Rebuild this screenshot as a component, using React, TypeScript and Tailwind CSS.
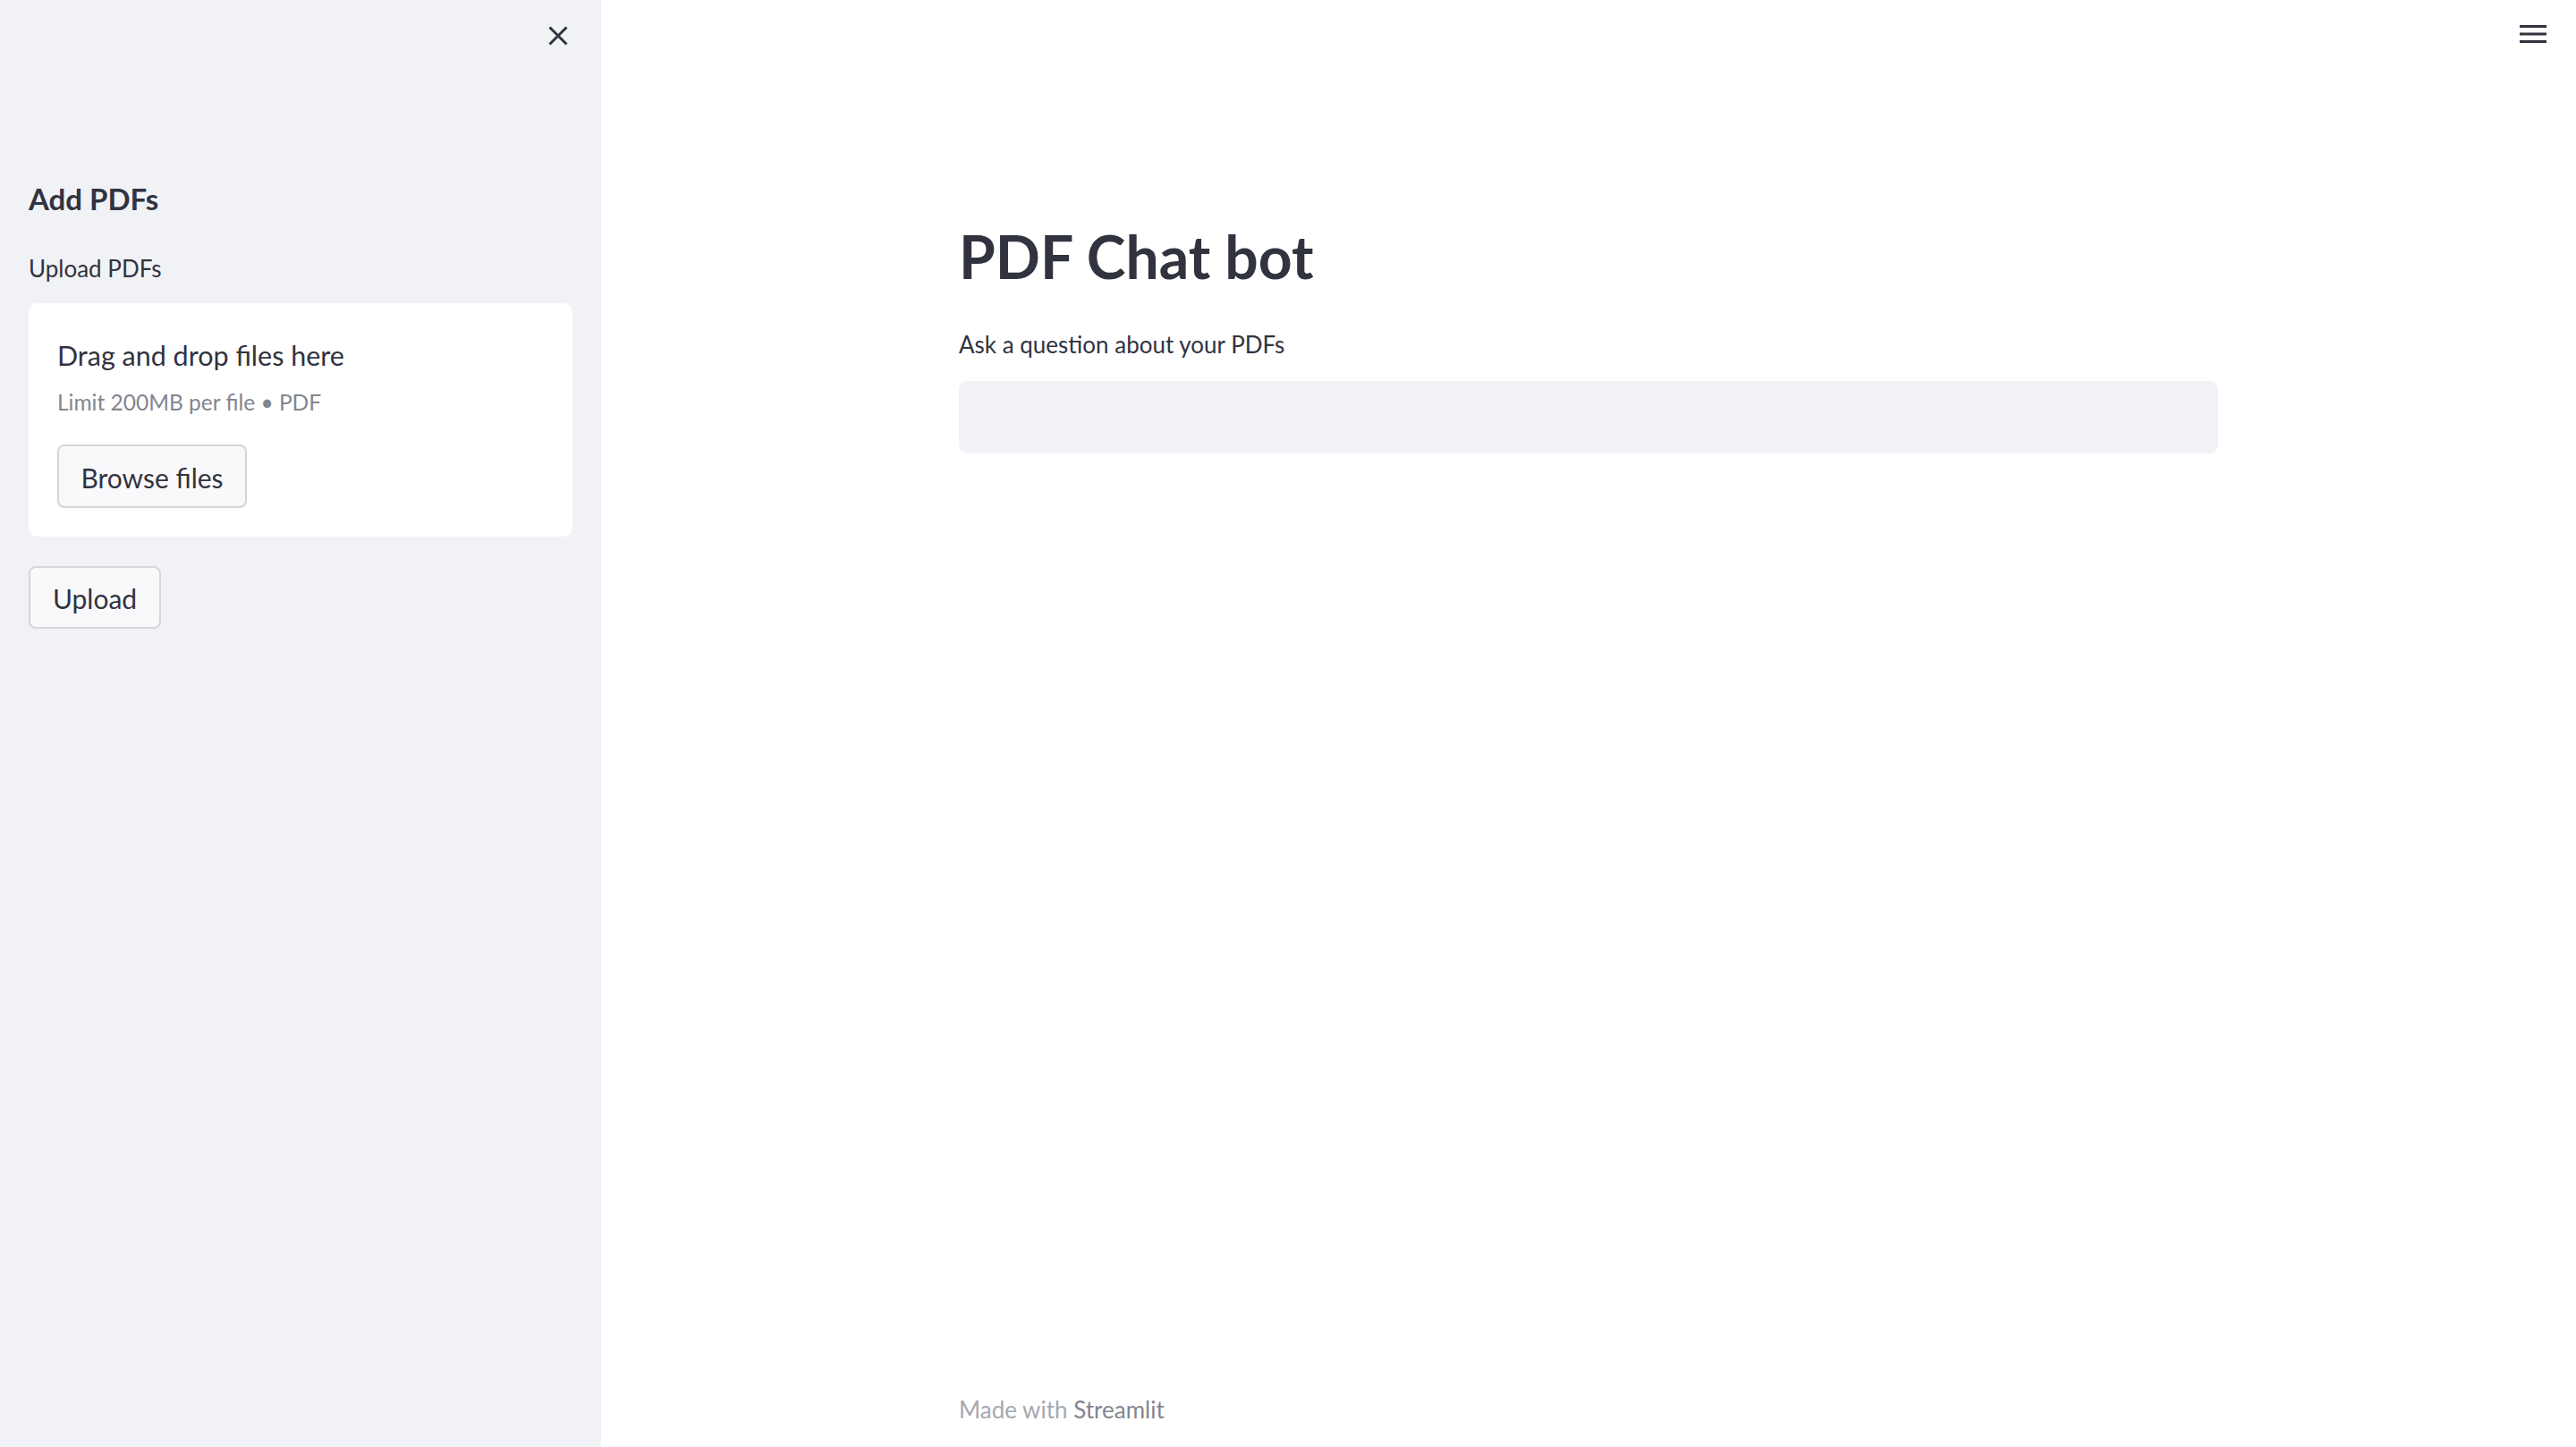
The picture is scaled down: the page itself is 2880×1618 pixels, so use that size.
import React from "react";

const font = { fontFamily: "Lato, 'Noto Sans', sans-serif" };

export default function App() {
  return (
    <div className="flex h-[1618px] w-full overflow-hidden bg-white text-[#31333f]" style={font}>
      {/* Sidebar */}
      <aside className="flex w-[672px] shrink-0 flex-col bg-[#f0f2f6] px-[32px]">
        <div className="flex justify-end pr-[5px] pt-[29px]">
          <svg width="22" height="22" viewBox="0 0 22 22" fill="none">
            <path d="M1.5 1.5L20.5 20.5M20.5 1.5L1.5 20.5" stroke="#31333f" strokeWidth="3" />
          </svg>
        </div>
        <h3 className="mt-[155px] text-[33px] font-bold leading-none">Add PDFs</h3>
        <div className="mt-[48px] text-[26px] leading-none">Upload PDFs</div>
        <section className="mt-[26px] flex h-[261px] flex-col items-start rounded-[10px] bg-white px-[32px] pt-[43px]">
          <div className="text-[30.5px] leading-none">Drag and drop files here</div>
          <div className="mt-[25px] text-[24.5px] leading-none text-[#838590]">Limit 200MB per file • PDF</div>
          <button className="mt-[35px] flex h-[71px] w-[212px] items-center justify-center rounded-[8px] border-2 border-[#d6d6d9] bg-[#f9f9fb] pt-[2px] text-[30px] leading-none text-[#31333f]">
            Browse files
          </button>
        </section>
        <button className="mt-[33px] flex h-[70px] w-[148px] items-center justify-center rounded-[8px] border-2 border-[#d6d6d9] bg-[#f9f9fb] pt-[2px] text-[30px] leading-none text-[#31333f]">
          Upload
        </button>
      </aside>

      {/* Main */}
      <main className="relative flex flex-1 flex-col">
        <div className="absolute right-[33px] top-[27px]">
          <svg width="30" height="22" viewBox="0 0 30 22" fill="none">
            <rect x="0" y="1" width="30" height="3" fill="#31333f" />
            <rect x="0" y="9.5" width="30" height="3" fill="#31333f" />
            <rect x="0" y="18" width="30" height="3" fill="#31333f" />
          </svg>
        </div>
        <div className="mx-auto flex w-[1408px] flex-1 flex-col pb-[29px] pt-[254px]">
          <h1 className="text-[66px] font-bold leading-none">PDF Chat bot</h1>
          <label className="mt-[52px] text-[26px] leading-none">Ask a question about your PDFs</label>
          <div className="mt-[28px] h-[81px] w-full rounded-[10px] bg-[#f0f2f6]" />
          <footer className="mt-auto text-[26px] leading-none text-[#a6a8b0]">
            Made with <span className="text-[#838590]">Streamlit</span>
          </footer>
        </div>
      </main>
    </div>
  );
}
